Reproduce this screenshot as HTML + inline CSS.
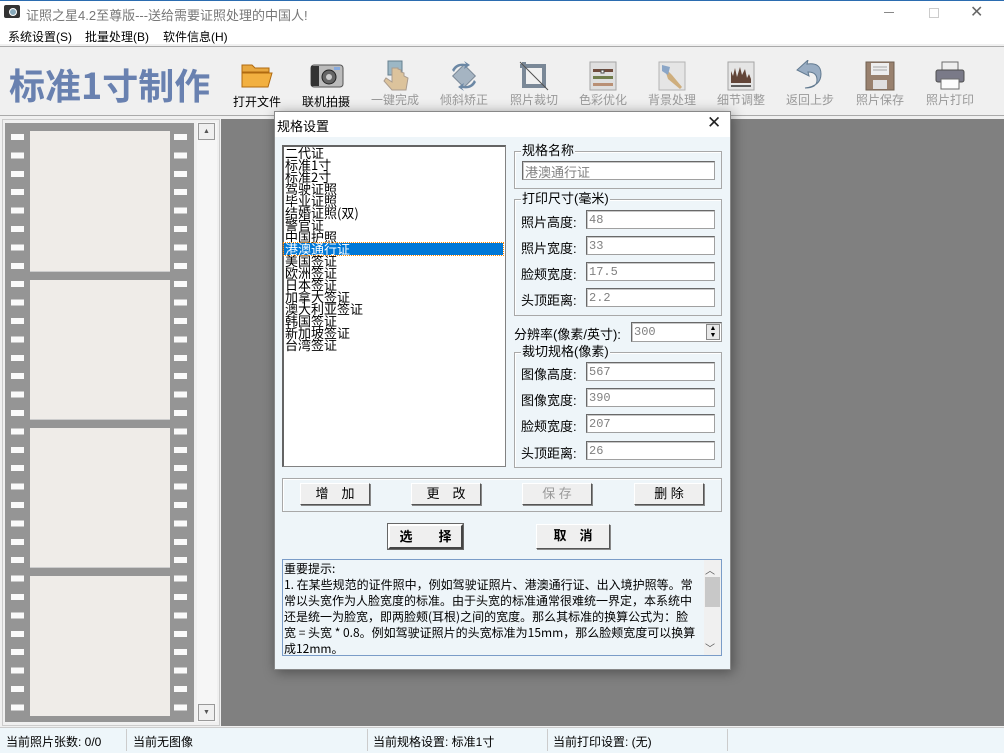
<!DOCTYPE html>
<html><head><meta charset="utf-8"><style>
*{margin:0;padding:0;box-sizing:border-box}
body{width:1004px;height:753px;position:relative;overflow:hidden;background:#f0f0f0;font-family:"Liberation Sans","Noto Sans CJK SC",sans-serif;font-size:12px;color:#000}
.a{position:absolute}
.tb{text-align:center;color:#999;font-size:12px}
.tb.on{color:#000}
.inp{position:absolute;background:#fff;border:1px solid #a0a0a0;border-top-color:#696969;border-left-color:#696969;box-shadow:inset 1px 1px 0 #c8c8c8;color:#808080;font-size:12px;padding:2px 0 0 2px;font-family:"Liberation Mono","Noto Sans CJK SC",monospace}
.grp{position:absolute;border:1px solid #a8a8a8;box-shadow:1px 1px 0 #fff inset}
.gl{position:absolute;top:-8px;left:6px;background:#eef5f9;padding:0 1px;font-size:13px;line-height:14px}
.lbl{position:absolute;font-size:13px}
.btn{position:absolute;background:#efefef;border:1px solid #fff;border-right-color:#555;border-bottom-color:#555;box-shadow:1px 1px 0 #888;text-align:center;font-size:13px;line-height:20px}
</style></head><body>
<div class="a" style="left:0;top:0;width:1004px;height:26px;background:#fff;border-top:1px solid #2b6cb0"></div>
<div class="a" style="left:4px;top:5px;width:16px;height:13px;background:#333;border-radius:2px"></div>
<div class="a" style="left:9px;top:8px;width:8px;height:8px;border-radius:50%;background:#8ab;border:1px solid #fff"></div>
<div class="a" style="left:26px;top:5px;font-size:13px;color:#777">证照之星4.2至尊版---送给需要证照处理的中国人!</div>
<div class="a" style="left:884px;top:12px;width:10px;height:1px;background:#888"></div>
<div class="a" style="left:929px;top:8px;width:10px;height:10px;border:1px solid #ccc"></div>
<div class="a" style="left:970px;top:2px;font-size:16px;color:#666">✕</div>
<div class="a" style="left:0;top:26px;width:1004px;height:18px;background:#fff"></div>
<div class="a" style="left:8px;top:28px;font-size:12px">系统设置(S)</div>
<div class="a" style="left:85px;top:28px;font-size:12px">批量处理(B)</div>
<div class="a" style="left:163px;top:28px;font-size:12px">软件信息(H)</div>
<div class="a" style="left:0;top:46px;width:1004px;height:70px;background:#f0f0f0;border-top:1px solid #aaa;border-bottom:1px solid #aaa"></div>
<div class="a" style="left:9px;top:61px;font-size:36px;font-weight:bold;color:#6981b0;font-family:'Noto Sans CJK SC','Liberation Sans',sans-serif;line-height:46px">标准1寸制作</div>
<svg class="a" style="left:240px;top:61px" width="36" height="28"><path d="M2 4h10l3 3h14v4H2z" fill="#e8a840" stroke="#b06a10"/><path d="M2 12h30l-4 14H2z" fill="#f2b040" stroke="#b06a10"/></svg>
<svg class="a" style="left:310px;top:61px" width="34" height="28"><rect x="1" y="4" width="32" height="22" rx="3" fill="#bbb" stroke="#555"/><rect x="1" y="5" width="8" height="20" fill="#333"/><circle cx="19" cy="16" r="7" fill="#666" stroke="#222"/><circle cx="19" cy="16" r="3" fill="#ccc"/><rect x="24" y="6" width="6" height="3" fill="#8ad"/></svg>
<svg class="a" style="left:382px;top:60px" width="30" height="32" opacity=".8"><rect x="6" y="1" width="14" height="14" fill="#8ab" stroke="#467"/><path d="M10 8v14l-6-4-2 3 8 9h14l2-12-4-2v-3l-3-1v-2l-3-1V8z" fill="#d8b888" stroke="#987"/></svg>
<svg class="a" style="left:448px;top:60px" width="32" height="32" opacity=".85"><rect x="8" y="8" width="16" height="16" transform="rotate(45 16 16)" fill="#9ab" stroke="#678"/><path d="M4 10q4-8 14-6l-2-3 6 4-6 4 1-3q-8-1-11 6z" fill="#579"/><path d="M28 22q-4 8-14 6l2 3-6-4 6-4-1 3q8 1 11-6z" fill="#579"/></svg>
<svg class="a" style="left:518px;top:60px" width="32" height="32" opacity=".85"><path d="M6 2v24h22M2 6h24v22" fill="none" stroke="#678" stroke-width="4"/><path d="M2 2l28 28" stroke="#333"/></svg>
<svg class="a" style="left:589px;top:61px" width="28" height="30" opacity=".85"><rect x="1" y="1" width="26" height="28" fill="#ddd" stroke="#999"/><rect x="4" y="8" width="20" height="3" fill="#5a3020"/><rect x="4" y="15" width="20" height="3" fill="#5a6a30"/><rect x="4" y="22" width="20" height="3" fill="#b08060"/><rect x="12" y="9" width="3" height="3" fill="#fff" stroke="#333"/></svg>
<svg class="a" style="left:658px;top:61px" width="28" height="30" opacity=".85"><rect x="1" y="1" width="26" height="28" fill="#e4e4e4" stroke="#aaa"/><path d="M6 6l8 8 10 12-2 2-12-10z" fill="#c9a36a"/><path d="M4 4l8 2-2 8-6-4z" fill="#7a9ac0"/></svg>
<svg class="a" style="left:727px;top:61px" width="28" height="30" opacity=".85"><rect x="1" y="1" width="26" height="28" fill="#e4e4e4" stroke="#999"/><path d="M4 22V10l2 5 2-8 2 9 3-10 2 8 3-6 2 9 2-4 2 5v4z" fill="#4a2818"/><rect x="4" y="24" width="20" height="2" fill="#444"/></svg>
<svg class="a" style="left:795px;top:60px" width="32" height="30" opacity=".85"><path d="M10 28q16-2 16-14T12 4l1-4-11 10 12 6-1-4q9 0 9 8t-12 8z" fill="#8aa2bc" stroke="#4a6680"/></svg>
<svg class="a" style="left:865px;top:61px" width="30" height="30" opacity=".85"><rect x="1" y="1" width="28" height="28" fill="#8a6e58" stroke="#5a4636"/><rect x="6" y="2" width="18" height="12" fill="#eee"/><path d="M8 6h14M8 9h14" stroke="#999"/><rect x="8" y="19" width="14" height="9" fill="#ddd"/></svg>
<svg class="a" style="left:934px;top:61px" width="32" height="30" opacity=".85"><rect x="8" y="1" width="16" height="9" fill="#eee" stroke="#555"/><rect x="2" y="9" width="28" height="12" rx="2" fill="#667" stroke="#333"/><rect x="7" y="18" width="18" height="10" fill="#fff" stroke="#555"/></svg>
<div class="a tb on" style="left:227px;top:93px;width:60px">打开文件</div>
<div class="a tb on" style="left:296px;top:93px;width:60px">联机拍摄</div>
<div class="a tb" style="left:365px;top:91px;width:60px">一键完成</div>
<div class="a tb" style="left:434px;top:91px;width:60px">倾斜矫正</div>
<div class="a tb" style="left:504px;top:91px;width:60px">照片裁切</div>
<div class="a tb" style="left:573px;top:91px;width:60px">色彩优化</div>
<div class="a tb" style="left:642px;top:91px;width:60px">背景处理</div>
<div class="a tb" style="left:711px;top:91px;width:60px">细节调整</div>
<div class="a tb" style="left:780px;top:91px;width:60px">返回上步</div>
<div class="a tb" style="left:850px;top:91px;width:60px">照片保存</div>
<div class="a tb" style="left:920px;top:91px;width:60px">照片打印</div>
<div class="a" style="left:2px;top:119px;width:218px;height:607px;background:#f0f0f0;border:1px solid #ccc"></div>
<div class="a" style="left:5px;top:123px;width:189px;height:599px;background:#959595"></div>
<div class="a" style="left:11px;top:134px;width:13px;height:588px;background:repeating-linear-gradient(to bottom,#fafafa 0 6px,transparent 6px 18.4px)"></div>
<div class="a" style="left:174px;top:134px;width:13px;height:588px;background:repeating-linear-gradient(to bottom,#fafafa 0 6px,transparent 6px 18.4px)"></div>
<div class="a" style="left:30px;top:131px;width:140px;height:141px;background:#efece8;border-bottom:1px solid #ccc"></div>
<div class="a" style="left:30px;top:280px;width:140px;height:140px;background:#efece8;border-bottom:1px solid #ccc"></div>
<div class="a" style="left:30px;top:428px;width:140px;height:140px;background:#efece8;border-bottom:1px solid #ccc"></div>
<div class="a" style="left:30px;top:576px;width:140px;height:140px;background:#efece8"></div>
<div class="a" style="left:197px;top:122px;width:20px;height:600px;background:#f6f6f6"></div>
<div class="a" style="left:198px;top:123px;width:17px;height:17px;background:#f0f0f0;border:1px solid #999;font-size:7px;text-align:center;line-height:15px;color:#555">▲</div>
<div class="a" style="left:198px;top:704px;width:17px;height:17px;background:#f0f0f0;border:1px solid #999;font-size:7px;text-align:center;line-height:15px;color:#555">▼</div>
<div class="a" style="left:221px;top:119px;width:783px;height:607px;background:#808080"></div>
<div class="a" style="left:0;top:727px;width:1004px;height:26px;background:#eef6fa;border-top:1px solid #ccc"></div>
<div class="a" style="left:126px;top:729px;width:1px;height:22px;background:#ccc"></div>
<div class="a" style="left:367px;top:729px;width:1px;height:22px;background:#ccc"></div>
<div class="a" style="left:547px;top:729px;width:1px;height:22px;background:#ccc"></div>
<div class="a" style="left:727px;top:729px;width:1px;height:22px;background:#ccc"></div>
<div class="a" style="left:6px;top:733px;font-size:12px">当前照片张数: 0/0</div>
<div class="a" style="left:133px;top:733px;font-size:12px">当前无图像</div>
<div class="a" style="left:373px;top:733px;font-size:12px">当前规格设置: 标准1寸</div>
<div class="a" style="left:553px;top:733px;font-size:12px">当前打印设置: (无)</div>
<div class="a" style="left:274px;top:111px;width:457px;height:559px;background:#eef5f9;border:1px solid #888;box-shadow:2px 2px 12px rgba(0,0,0,.4)"></div>
<div class="a" style="left:275px;top:112px;width:455px;height:25px;background:#fff"></div>
<div class="a" style="left:277px;top:116px;font-size:13px">规格设置</div>
<div class="a" style="left:707px;top:113px;font-size:17px;color:#222">✕</div>
<div class="a" style="left:282px;top:145px;width:224px;height:322px;background:#fff;border:1px solid #828282;border-top:2px solid #646464;border-left:2px solid #646464"></div>
<div class="a" style="left:285px;top:147px;font-size:13px;line-height:12px;font-family:'Noto Sans CJK SC',sans-serif">
<div>二代证</div><div>标准1寸</div><div>标准2寸</div><div>驾驶证照</div><div>毕业证照</div><div>结婚证照(双)</div><div>警官证</div><div>中国护照</div>
<div style="background:#0078d7;color:#fff;width:219px;margin-left:-1px;padding-left:1px;outline:1px dotted #f80">港澳通行证</div>
<div>美国签证</div><div>欧洲签证</div><div>日本签证</div><div>加拿大签证</div><div>澳大利亚签证</div><div>韩国签证</div><div>新加坡签证</div><div>台湾签证</div></div>
<div class="grp" style="left:514px;top:151px;width:208px;height:38px"><div class="gl">规格名称</div></div>
<div class="inp" style="left:522px;top:161px;width:193px;height:19px;font-family:'Noto Sans CJK SC',sans-serif;font-size:13px;padding-top:0">港澳通行证</div>
<div class="grp" style="left:514px;top:199px;width:208px;height:117px"><div class="gl">打印尺寸(毫米)</div></div>
<div class="lbl" style="left:521px;top:212px">照片高度:</div><div class="inp" style="left:586px;top:210px;width:129px;height:19px">48</div>
<div class="lbl" style="left:521px;top:238px">照片宽度:</div><div class="inp" style="left:586px;top:236px;width:129px;height:19px">33</div>
<div class="lbl" style="left:521px;top:264px">脸颊宽度:</div><div class="inp" style="left:586px;top:262px;width:129px;height:19px">17.5</div>
<div class="lbl" style="left:521px;top:290px">头顶距离:</div><div class="inp" style="left:586px;top:288px;width:129px;height:19px">2.2</div>
<div class="lbl" style="left:514px;top:324px">分辨率(像素/英寸):</div>
<div class="inp" style="left:631px;top:322px;width:91px;height:20px">300</div>
<div class="a" style="left:706px;top:324px;width:14px;height:16px;background:#e8e8e8;border:1px solid #888;font-size:7px;line-height:7px;text-align:center">▲<br>▼</div>
<div class="grp" style="left:514px;top:352px;width:208px;height:116px"><div class="gl">裁切规格(像素)</div></div>
<div class="lbl" style="left:521px;top:364px">图像高度:</div><div class="inp" style="left:586px;top:362px;width:129px;height:19px">567</div>
<div class="lbl" style="left:521px;top:390px">图像宽度:</div><div class="inp" style="left:586px;top:388px;width:129px;height:19px">390</div>
<div class="lbl" style="left:521px;top:416px">脸颊宽度:</div><div class="inp" style="left:586px;top:414px;width:129px;height:19px">207</div>
<div class="lbl" style="left:521px;top:443px">头顶距离:</div><div class="inp" style="left:586px;top:441px;width:129px;height:19px">26</div>
<div class="grp" style="left:282px;top:478px;width:440px;height:34px"></div>
<div class="btn" style="left:300px;top:483px;width:70px;height:22px">增　加</div>
<div class="btn" style="left:411px;top:483px;width:70px;height:22px">更　改</div>
<div class="btn" style="left:522px;top:483px;width:70px;height:22px;color:#999">保 存</div>
<div class="btn" style="left:634px;top:483px;width:70px;height:22px">删 除</div>
<div class="btn" style="left:388px;top:524px;width:75px;height:25px;font-weight:bold;line-height:22px;border:2px solid #fff;border-right-color:#444;border-bottom-color:#444;outline:1px solid #666">选　　择</div>
<div class="btn" style="left:536px;top:524px;width:74px;height:25px;font-weight:bold;line-height:22px">取　消</div>
<div class="a" style="left:282px;top:559px;width:440px;height:97px;background:#eef5f9;border:1px solid #7a9cc8"></div>
<div class="a" style="left:284px;top:561px;width:414px;font-size:12px;line-height:16px;font-family:'Noto Sans CJK SC',sans-serif">重要提示:<br>1. 在某些规范的证件照中，例如驾驶证照片、港澳通行证、出入境护照等。常常以头宽作为人脸宽度的标准。由于头宽的标准通常很难统一界定，本系统中还是统一为脸宽，即两脸颊(耳根)之间的宽度。那么其标准的换算公式为：脸宽 = 头宽 * 0.8。例如驾驶证照片的头宽标准为15mm，那么脸颊宽度可以换算成12mm。</div>
<div class="a" style="left:704px;top:560px;width:17px;height:95px;background:#f0f0f0"></div>
<div class="a" style="left:705px;top:577px;width:15px;height:30px;background:#c8c8c8"></div>
<div class="a" style="left:705px;top:562px;font-size:10px;color:#555">︿</div>
<div class="a" style="left:705px;top:640px;font-size:10px;color:#555">﹀</div>
</body></html>
